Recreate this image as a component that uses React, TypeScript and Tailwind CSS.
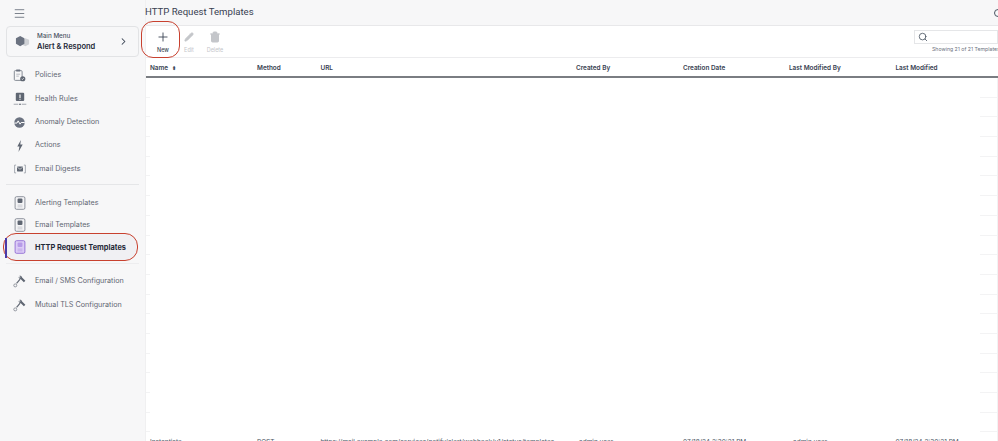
import { ChevronRight, Menu, Pencil, Plus, Search, Trash2 } from "lucide-react";
import type { ReactNode } from "react";

function PoliciesIcon() {
  return (
    <svg viewBox="0 0 20 20" className="size-[13px]" fill="none">
      <rect x="2" y="2.500" width="12" height="15" rx="1.500" stroke="#7b818b" strokeWidth="1.4" />
      <rect x="5" y="0.800" width="6" height="3" fill="#6b7280" />
      <path d="M5 8h6M5 11h4" stroke="#a5a9b0" strokeWidth="1.200" />
      <circle cx="15" cy="15" r="4" fill="#5f6672" />
      <path d="M13.200 15l1.300 1.300 2.200-2.500" stroke="#fff" strokeWidth="1" />
    </svg>
  );
}

function HealthIcon() {
  return (
    <svg viewBox="0 0 20 20" className="size-[14px]" fill="none">
      <rect x="4" y="1" width="12" height="12" rx="1.500" fill="#5f6672" />
      <path d="M10 3.500v5M10 9.700v1.500" stroke="#fff" strokeWidth="1.600" />
      <path d="M1 17.500h6.500M12.500 17.500H19" stroke="#8b919b" strokeWidth="1.100" />
      <circle cx="10" cy="17.500" r="1.200" fill="#5f6672" />
    </svg>
  );
}

function AnomalyIcon() {
  return (
    <svg viewBox="0 0 20 20" className="size-[11px]" fill="none">
      <circle cx="10" cy="10" r="9.500" fill="#6b7280" />
      <path d="M0.500 11h5l2-4 3.500 6 2-3h6.500" stroke="#fff" strokeWidth="1.800" />
    </svg>
  );
}

function BoltIcon() {
  return (
    <svg viewBox="0 0 10 20" className="h-[12px] w-[6px]">
      <path d="M6.500 0L0.500 11h3.500L2.500 20 9.500 7.500H5.500z" fill="#5f6672" />
    </svg>
  );
}

function DigestIcon() {
  return (
    <svg viewBox="0 0 20 20" className="size-[12px]" fill="none">
      <path d="M3.500 3.500H1v13h2.500M16.500 3.500H19v13h-2.500" stroke="#8b919b" strokeWidth="1.200" />
      <rect x="5" y="6" width="10" height="8" rx="1" fill="#5f6672" />
      <path d="M5.500 7L10 10.500 14.500 7" stroke="#fff" strokeWidth="1" />
    </svg>
  );
}

function TemplateIcon({ color = "#7b818b", fill = "#f4f4f6", mark = "#5f6672" }: { color?: string; fill?: string; mark?: string }) {
  return (
    <svg viewBox="0 0 20 20" className="size-[14px]" fill="none">
      <rect x="3" y="1" width="14" height="18" rx="2" fill={fill} stroke={color} strokeWidth="1.200" />
      <rect x="6.500" y="3.500" width="7" height="6.500" rx="1.500" fill={mark} />
      <path d="M6.500 13h7M6.500 15.500h7" stroke={color} strokeOpacity="0.5" strokeWidth="1" />
    </svg>
  );
}

function ConfigIcon() {
  return (
    <svg viewBox="0 0 20 20" className="size-[13px]" fill="none">
      <path d="M9.500 1.500c2-.8 4 .2 4.500 2.200l5 5-2.300 2.300-5-5c-2 .1-3.300-1.500-3-3.200l1.800 1.500 1.300-1.300z" fill="#5f6672" />
      <path d="M11 6.500L5.500 13" stroke="#5f6672" strokeWidth="1.800" />
      <circle cx="3.500" cy="16" r="2.300" stroke="#7b818b" strokeWidth="1.200" />
    </svg>
  );
}

function NavRow({ icon, label, tight }: { icon: ReactNode; label: string; tight?: boolean }) {
  return (
    <div className={`flex items-center ${tight ? "h-[22px]" : "h-[23.400px]"}`}>
      <div className="flex w-[35px] shrink-0 justify-center pl-[4px]">{icon}</div>
      <span className="text-[7.200px] font-normal text-[#5f6672]">{label}</span>
    </div>
  );
}

function Sidebar() {
  return (
    <aside className="flex w-[146px] shrink-0 flex-col border-r border-[#f0f0f1] bg-[#f7f7f8]">
      <div className="flex h-[26px] items-center pl-[13px] pt-[1px]">
        <Menu className="size-[13px] text-[#5f6672]" strokeWidth={1.500} />
      </div>
      <div className="mx-[6px] flex h-[31px] items-center rounded-[4px] border border-[#e2e3e5] bg-[#f7f7f8] pl-[8px] pr-[6px]">
        <svg viewBox="0 0 16 14" className="mr-[7px] size-[15px] shrink-0">
          <path d="M11 3.500l4 1.500v5l-4 2-3-1.500v-5z" fill="#cfd1d5" />
          <path d="M5.500 1l4.500 2.500v6L5.500 12 1 9.500v-6z" fill="#6b7280" />
        </svg>
        <div className="flex-1 leading-none">
          <div className="text-[6.300px] font-medium leading-[9px] text-[#4b5563]">Main Menu</div>
          <div className="text-[7.500px] font-semibold leading-[11px] text-[#1f2937]">Alert &amp; Respond</div>
        </div>
        <ChevronRight className="mr-[3px] size-[11px] text-[#374151]" strokeWidth={2.200} />
      </div>

      <div className="mt-[7px]">
        <NavRow icon={<PoliciesIcon />} label="Policies" />
        <NavRow icon={<HealthIcon />} label="Health Rules" />
        <NavRow icon={<AnomalyIcon />} label="Anomaly Detection" />
        <NavRow icon={<BoltIcon />} label="Actions" />
        <NavRow icon={<DigestIcon />} label="Email Digests" />
      </div>

      <div className="mx-[6px] mt-[3px] border-t border-[#e5e6e8]" />

      <div className="mt-[7.500px]">
        <NavRow tight icon={<TemplateIcon />} label="Alerting Templates" />
        <NavRow tight icon={<TemplateIcon />} label="Email Templates" />
      </div>

      <div className="relative -mt-[3.500px] flex h-[28px] items-center">
        <div className="absolute left-[3px] top-0 h-[28px] w-[135px] rounded-[13px] border-[1.500px] border-[#c8412f] bg-[#f0f0f3]" />
        <div className="absolute left-[5px] top-[5px] h-[20px] w-[2px] bg-[#4a3aa8]" />
        <div className="relative flex w-[35px] shrink-0 justify-center pl-[4px]">
          <TemplateIcon color="#8a63d2" fill="#dccdf6" mark="#b79be8" />
        </div>
        <span className="relative pt-[1px] text-[7.400px] font-bold text-[#1f2937]">HTTP Request Templates</span>
      </div>

      <div className="mx-[6px] mt-[2px] border-t border-[#ededef]" />

      <div className="mt-[6px]">
        <NavRow icon={<ConfigIcon />} label="Email / SMS Configuration" />
        <NavRow icon={<ConfigIcon />} label="Mutual TLS Configuration" />
      </div>
    </aside>
  );
}

function ToolButton({ icon, label, muted }: { icon: ReactNode; label: string; muted?: boolean }) {
  return (
    <div className="flex w-[26px] flex-col items-center">
      <div className="flex h-[16px] items-center">{icon}</div>
      <span className={`mt-[2px] text-[5.500px] leading-[7px] ${muted ? "text-[#c4c6ca]" : "font-medium text-[#374151]"}`}>
        {label}
      </span>
    </div>
  );
}

const columns = [
  { label: "Method", width: "w-[63.500px]" },
  { label: "URL", width: "w-[255.500px]" },
  { label: "Created By", width: "w-[107px]" },
  { label: "Creation Date", width: "w-[106px]" },
  { label: "Last Modified By", width: "w-[106.500px]" },
  { label: "Last Modified", width: "w-[90px]" },
];

const emptyRows = Array.from({ length: 18 }, (_, index) => index);

export default function App() {
  return (
    <div className="flex h-[441px] w-[998px] overflow-hidden bg-white font-['Inter','Liberation_Sans',sans-serif]">
      <Sidebar />
      <main className="flex min-w-0 flex-1 flex-col">
        <header className="flex h-[26px] shrink-0 items-center justify-between border-b border-[#e8e8ea] bg-[#f7f7f8]">
          <h1 className="-ml-px font-['Roboto','Liberation_Sans',sans-serif] text-[9.600px] font-normal text-[#374151]">
            HTTP Request Templates
          </h1>
          <div className="-mr-[4px] size-[8px] rounded-full border border-[#4b5563]" />
        </header>

        <div className="flex h-[32px] shrink-0 items-start justify-between border-b border-[#ececee] pt-[3px]">
          <div className="relative flex pl-[4px]">
            <div className="absolute -top-[8px] -left-[5px] h-[37px] w-[39px] rounded-[12px] border-[1.500px] border-[#c8412f]" />
            <ToolButton icon={<Plus className="size-[14px] text-[#374151]" strokeWidth={1.500} />} label="New" />
            <ToolButton muted icon={<Pencil className="size-[10px] fill-[#c4c6ca] text-[#c4c6ca]" />} label="Edit" />
            <ToolButton muted icon={<Trash2 className="size-[12px] fill-[#c4c6ca] text-[#c4c6ca]" />} label="Delete" />
          </div>
          <div className="flex flex-col items-end">
            <div className="mt-px flex h-[14px] w-[84px] items-center border border-[#e5e6e8] pl-[3px]">
              <Search className="size-[10px] text-[#4b5563]" />
            </div>
            <span className="mt-[1px] w-[66px] whitespace-nowrap text-[5.200px] leading-[8px] text-[#6b7280]">
              Showing 21 of 21 Templates
            </span>
          </div>
        </div>

        <div className="flex h-[20px] shrink-0 items-center border-b-2 border-[#7a7d82] pt-[3px] text-[6.400px] font-semibold text-[#374151]">
          <div className="flex w-[111px] items-center pl-[4px]">
            Name
            <span className="ml-[4px] text-[5px] leading-none text-[#374151]">⬍</span>
          </div>
          {columns.map((column) => (
            <div key={column.label} className={column.width}>
              {column.label}
            </div>
          ))}
        </div>

        <div className="flex-1 overflow-hidden border-r border-[#f2f2f3]">
          {emptyRows.map((row) => (
            <div key={row} className="flex h-[19.700px] justify-between">
              <div className="w-[4px] border-b border-[#f3f3f4]" />
              <div className="w-[17px] border-b border-[#f3f3f4]" />
            </div>
          ))}
          <div className="flex pt-[6px] text-[6.500px] leading-[9px] text-[#4b5563]">
            <div className="w-[111px] pl-[4px]">Instantiate</div>
            <div className="w-[63.500px]">POST</div>
            <div className="w-[255.500px] whitespace-nowrap">https://mail.example.com/services/notify/alert/webhook/v1/status/templates</div>
            <div className="w-[107px] pl-[3px]">admin.user</div>
            <div className="w-[106px]">07/18/24 2:30:21 PM</div>
            <div className="w-[106.500px] pl-[4px]">admin.user</div>
            <div className="w-[90px] whitespace-nowrap">07/18/24 2:30:21 PM</div>
          </div>
        </div>
      </main>
    </div>
  );
}
